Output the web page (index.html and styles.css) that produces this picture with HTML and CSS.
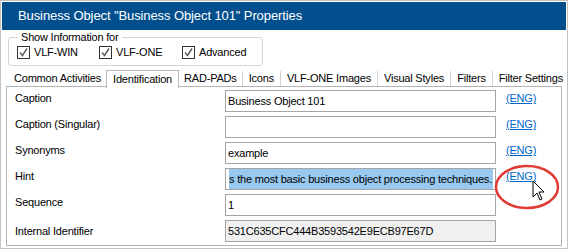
FILE: index.html
```html
<!DOCTYPE html>
<html lang="en">
<head>
    <meta charset="UTF-8">
    <title>Business Object Properties</title>
    <link rel="stylesheet" href="styles.css">
</head>
<body>
    <div class="window">
        <div class="titlebar">Business Object "Business Object 101" Properties</div>

        <div class="content">
            <!-- Show information for -->
            <fieldset class="show-info">
                <legend>Show Information for</legend>
                <label class="check"><span class="box"><svg width="11" height="11" viewBox="0 0 11 11"><polyline points="2,5.5 4.5,8.5 9,1.5" fill="none" stroke="#5a5a5a" stroke-width="1.4"/></svg></span>VLF-WIN</label>
                <label class="check"><span class="box"><svg width="11" height="11" viewBox="0 0 11 11"><polyline points="2,5.5 4.5,8.5 9,1.5" fill="none" stroke="#5a5a5a" stroke-width="1.4"/></svg></span>VLF-ONE</label>
                <label class="check"><span class="box"><svg width="11" height="11" viewBox="0 0 11 11"><polyline points="2,5.5 4.5,8.5 9,1.5" fill="none" stroke="#5a5a5a" stroke-width="1.4"/></svg></span>Advanced</label>
            </fieldset>

            <!-- Tabs -->
            <div class="tabs">
                <div class="tab first">Common Activities</div>
                <div class="tab active">Identification</div>
                <div class="tab">RAD-PADs</div>
                <div class="tab sep">Icons</div>
                <div class="tab sep">VLF-ONE Images</div>
                <div class="tab sep">Visual Styles</div>
                <div class="tab sep">Filters</div>
                <div class="tab sep">Filter Settings</div>
            </div>

            <div class="panel">
                <div class="row">
                    <div class="label">Caption</div>
                    <div class="field">Business Object 101</div>
                    <a class="eng" href="#">(ENG)</a>
                </div>
                <div class="row">
                    <div class="label">Caption (Singular)</div>
                    <div class="field"></div>
                    <a class="eng" href="#">(ENG)</a>
                </div>
                <div class="row">
                    <div class="label">Synonyms</div>
                    <div class="field">example</div>
                    <a class="eng" href="#">(ENG)</a>
                </div>
                <div class="row">
                    <div class="label">Hint</div>
                    <div class="field scrolled"><span class="selected">s the most basic business object processing techniques.</span></div>
                    <a class="eng" href="#">(ENG)</a>
                </div>
                <div class="row">
                    <div class="label">Sequence</div>
                    <div class="field">1</div>
                </div>
                <div class="row">
                    <div class="label low">Internal Identifier</div>
                    <div class="field readonly">531C635CFC444B3593542E9ECB97E67D</div>
                </div>
            </div>
        </div>

        <!-- callout round the hint link -->
        <svg class="callout" width="68" height="48" viewBox="0 0 68 48">
            <ellipse cx="34" cy="24" rx="31" ry="21" fill="none" stroke="#df3b34" stroke-width="2.5"/>
        </svg>
        <svg class="cursor" width="14" height="22" viewBox="0 0 14 22">
            <polygon points="1,1 1,17 5,13 8,20 10,19 7,12 12,12" fill="#fff" stroke="#000" stroke-width="1" stroke-linejoin="miter"/>
        </svg>
    </div>
</body>
</html>
```

FILE: styles.css
```css
body {
    margin: 0;
    padding: 0;
    background: #fff;
}

.window {
    position: relative;
    width: 568px;
    height: 249px;
    box-sizing: border-box;
    border: 1px solid #c3c3c3;
    padding: 1px;
    background: #fff;
    display: flex;
    flex-direction: column;
    font-family: "Liberation Sans", Arial, sans-serif;
    font-size: 11px;
    letter-spacing: -0.2px;
    color: #000;
}

.titlebar {
    height: 28px;
    line-height: 28px;
    background: #034f8e;
    color: #fff;
    font-size: 13px;
    letter-spacing: -0.1px;
    padding-left: 16px;
    white-space: nowrap;
}

.content {
    flex: 1;
    display: flex;
    flex-direction: column;
    padding: 0 4px 1px;
}

.show-info {
    margin: 0 0 0 2px;
    width: 255px;
    box-sizing: border-box;
    border: 1px solid #d6d6d6;
    border-radius: 3px;
    padding: 1px 8px 5px;
    display: grid;
    grid-template-columns: 82px 83px auto;
}

.show-info legend {
    padding: 0 3px;
    margin-left: 1px;
    line-height: 14px;
}

.check {
    display: flex;
    align-items: center;
    gap: 4px;
    line-height: 15px;
}

.box {
    width: 13px;
    height: 13px;
    box-sizing: border-box;
    border: 1px solid #333;
    background: #fff;
    display: flex;
    align-items: center;
    justify-content: center;
}

.tabs {
    display: flex;
    margin: 4px 0 -1px 2px;
    height: 17px;
    position: relative;
    z-index: 1;
}

.tab {
    padding: 0 5px;
    line-height: 17px;
    white-space: nowrap;
}

.tab.first {
    padding-left: 6px;
}

.tab.sep {
    border-left: 1px solid #d3d3d3;
    height: 15px;
    margin-top: 1px;
    padding: 0 6px;
    line-height: 15px;
}

.tab.active {
    background: #fff;
    border: 1px solid #b9b9b9;
    border-bottom: none;
    height: 17px;
    padding: 0 6px;
    line-height: 16px;
}

.panel {
    flex: 1;
    border: 1px solid #b4b4b4;
    padding: 3px 0 0 8px;
    display: flex;
    flex-direction: column;
    gap: 4px;
}

.row {
    display: grid;
    grid-template-columns: 210px 271px auto;
    align-items: start;
}

.label {
    line-height: 15px;
    padding-top: 1px;
}

.label.low {
    padding-top: 4px;
}

.field {
    height: 22px;
    box-sizing: border-box;
    border: 1px solid #a5a5a5;
    padding: 0 2px;
    line-height: 20px;
    white-space: nowrap;
    overflow: hidden;
}

.field.readonly {
    background: #f0f0f0;
}

.field.scrolled {
    display: flex;
    justify-content: flex-end;
    padding: 0 2px 0 0;
}

.selected {
    flex-shrink: 0;
    background: #99c9ef;
    padding-right: 1px;
}

.eng {
    margin-left: 10px;
    color: #0066cc;
    line-height: 15px;
    padding-top: 1px;
}

.callout {
    position: absolute;
    left: 492px;
    top: 162px;
}

.cursor {
    position: absolute;
    left: 531px;
    top: 179px;
}
```
